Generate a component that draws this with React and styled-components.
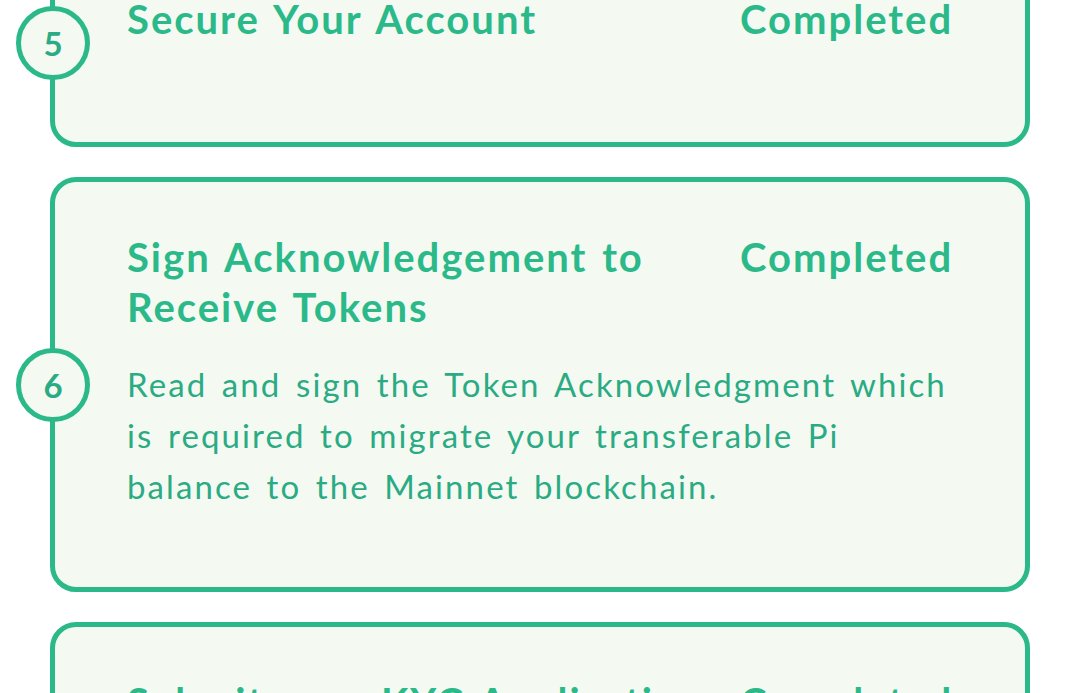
import React from "react";
import styled, { createGlobalStyle } from "styled-components";

const green = "#2bb98a";
const text = "#2aab83";
const cardBg = "#f4faf2";

const GlobalStyle = createGlobalStyle`
  html, body {
    margin: 0;
    padding: 0;
    background: #ffffff;
  }
  body {
    font-family: Lato, "Open Sans", sans-serif;
    overflow: hidden;
  }
`;

const Page = styled.div`
  width: 1080px;
  height: 693px;
  overflow: hidden;
  background: #ffffff;
`;

// list is scrolled: first card starts above the viewport
const StepList = styled.div`
  display: flex;
  flex-direction: column;
  gap: 30px;
  margin-top: -61px;
  padding-left: 50px;
  width: 980px;
`;

const Card = styled.div`
  position: relative;
  box-sizing: border-box;
  min-height: ${(p) => p.$minHeight || 0}px;
  display: grid;
  grid-template-columns: 605px 1fr;
  column-gap: 8px;
  align-content: start;
  padding: 50px 72px 75px 72px;
  border: 5px solid ${green};
  border-radius: 26px;
  background: ${cardBg};
`;

const StepBadge = styled.div`
  position: absolute;
  left: -39px;
  top: 50%;
  transform: translateY(-50%);
  box-sizing: border-box;
  width: 74px;
  height: 74px;
  border: 5px solid ${green};
  border-radius: 50%;
  background: ${cardBg};
  display: flex;
  align-items: center;
  justify-content: center;
  font-size: 33px;
  font-weight: 700;
  color: ${text};
`;

const Title = styled.h3`
  margin: 0;
  font-size: 40px;
  line-height: 50px;
  font-weight: 700;
  letter-spacing: 2px;
  word-spacing: 3px;
  color: ${green};
`;

const Status = styled.span`
  font-size: 40px;
  line-height: 50px;
  font-weight: 700;
  letter-spacing: 2px;
  color: ${green};
  white-space: nowrap;
`;

const Description = styled.p`
  grid-column: 1 / -1;
  margin: 27px 0 0;
  font-size: 33px;
  line-height: 51px;
  font-weight: 400;
  letter-spacing: 2.1px;
  word-spacing: 4px;
  color: ${text};
`;

const steps = [
  { n: 5, title: "Secure Your Account", status: "Completed", minHeight: 208 },
  {
    n: 6,
    title: "Sign Acknowledgement to Receive Tokens",
    status: "Completed",
    desc: "Read and sign the Token Acknowledgment which is required to migrate your transferable Pi balance to the Mainnet blockchain.",
  },
  { n: 7, title: "Submit your KYC Application", status: "Completed", minHeight: 260 },
];

const App = () => {
  return (
    <Page>
      <GlobalStyle />
      <StepList>
        {steps.map((s) => (
          <Card key={s.n} $minHeight={s.minHeight}>
            <StepBadge>{s.n}</StepBadge>
            <Title>{s.title}</Title>
            <Status>{s.status}</Status>
            {s.desc && <Description>{s.desc}</Description>}
          </Card>
        ))}
      </StepList>
    </Page>
  );
};

export default App;
